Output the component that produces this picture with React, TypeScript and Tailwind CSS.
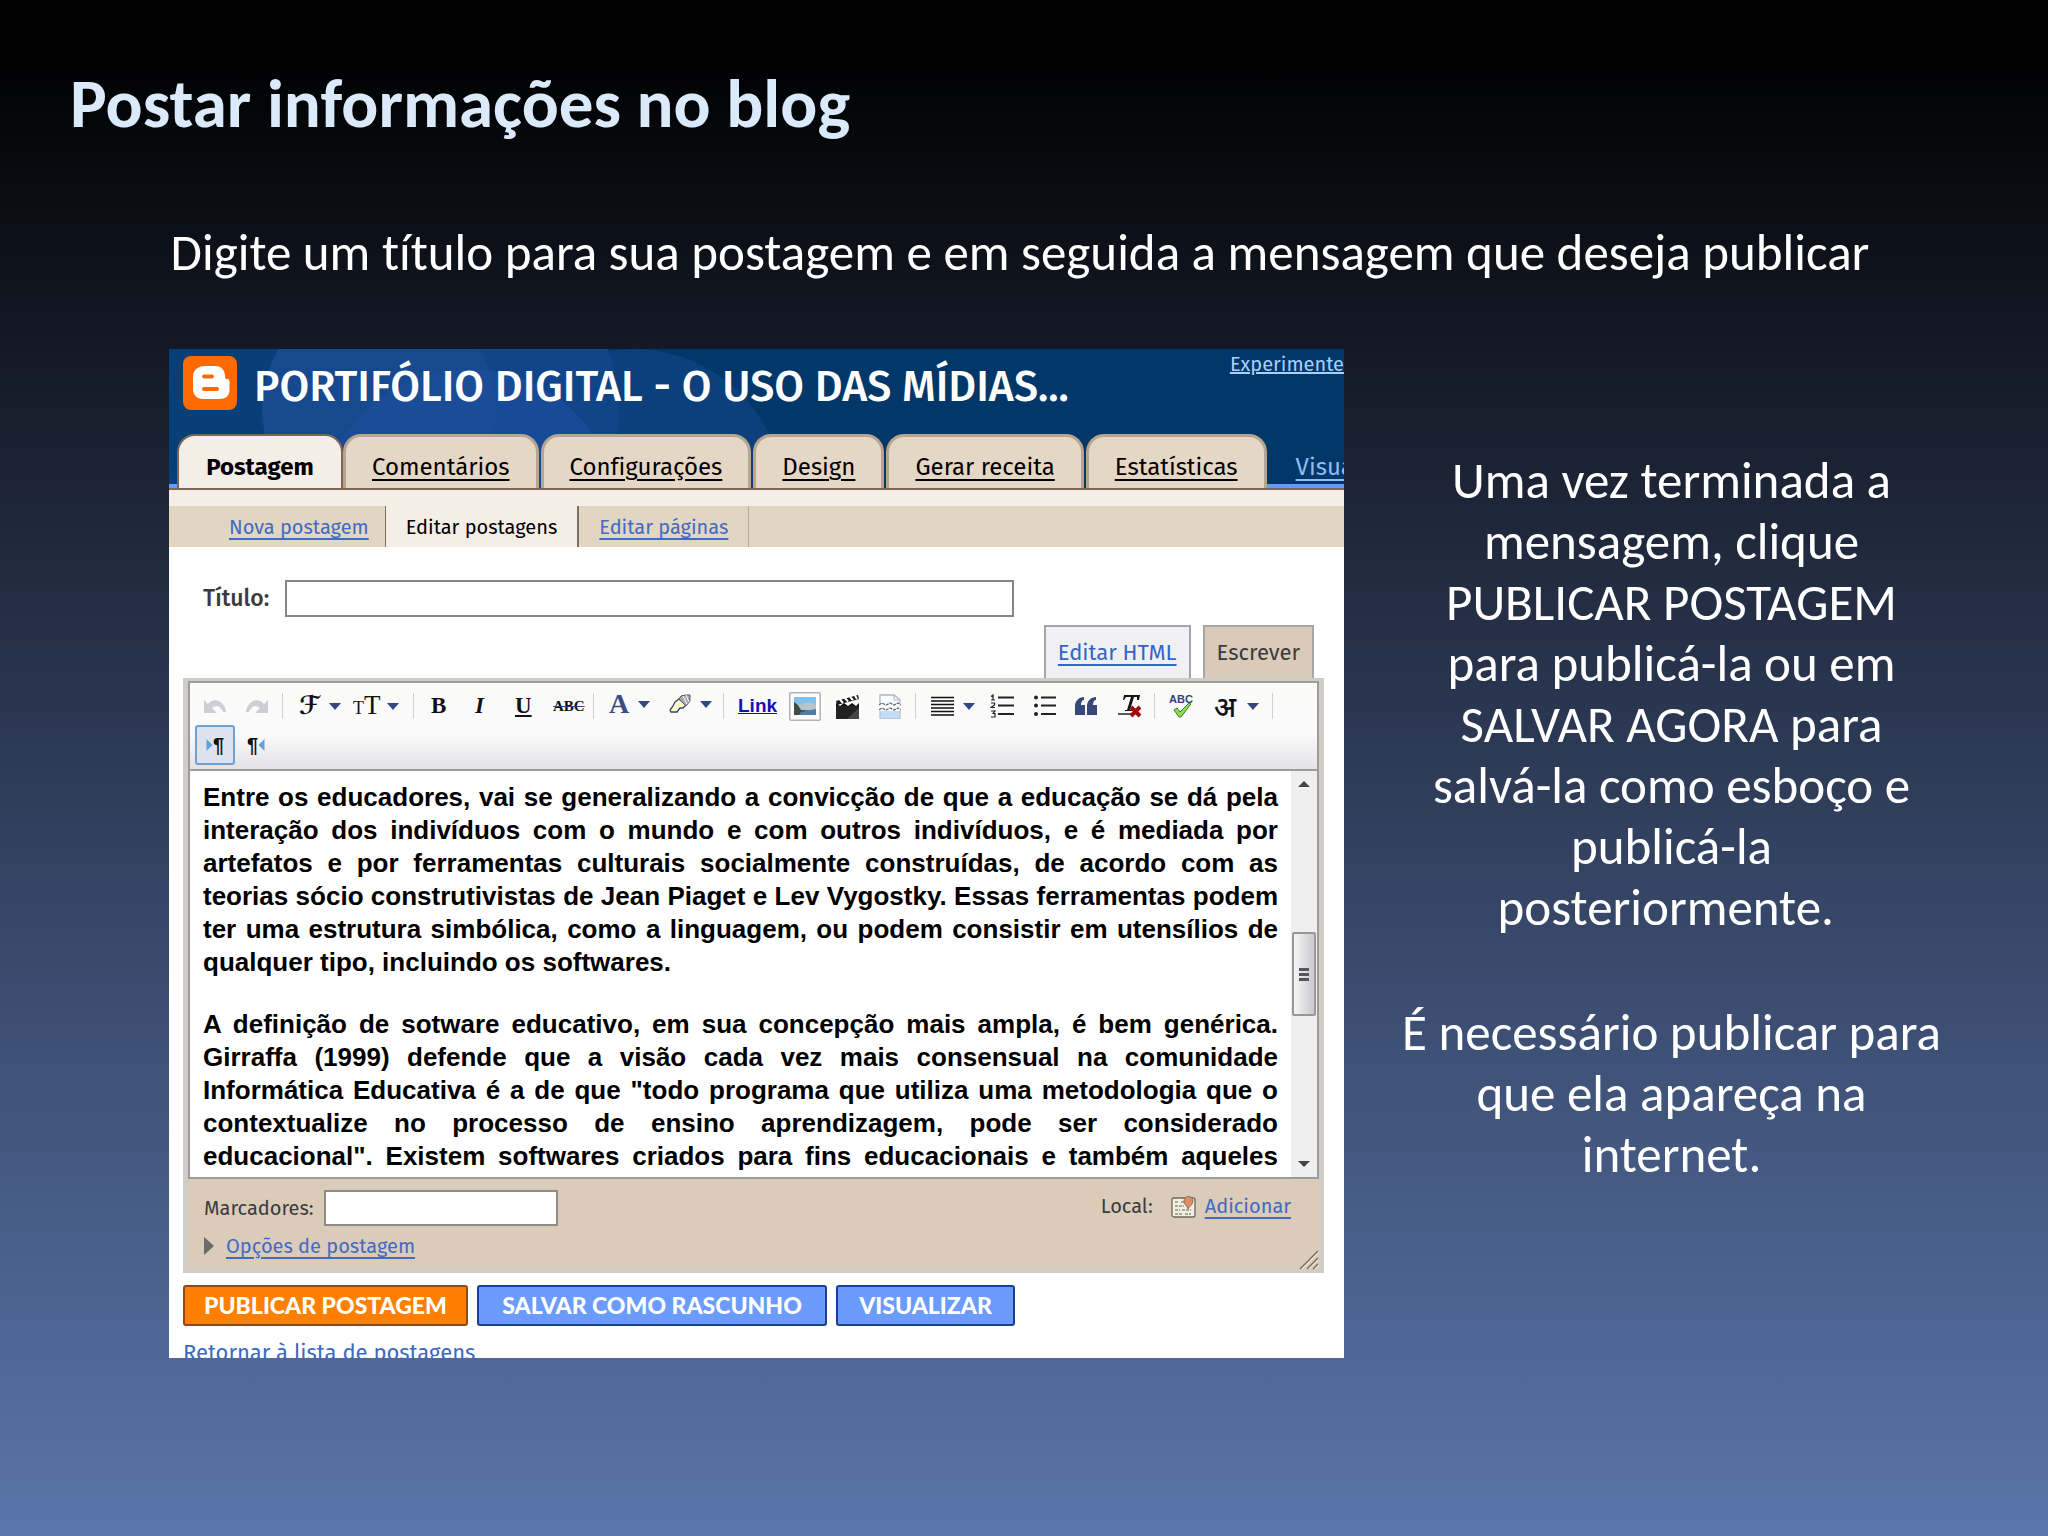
import {useState} from "react";
import type {ReactNode} from "react";

const tabs = ["Comentários", "Configurações", "Design", "Gerar receita", "Estatísticas"];

const Logo = () => (
  <svg viewBox="0 0 54 54" className="h-[54px] w-[54px] flex-none" aria-hidden="true">
    <rect width="54" height="54" rx="8" fill="#fe6a00" />
    <path
      d="M22 10h10c7 0 10 5 10 10 0 3 1 3 2.500 3 1.500 0 2 1 2 3v8c0 6-4 9-10 9H20c-6 0-10-4-10-10V21c0-7 5-11 12-11z"
      fill="#fff"
    />
    <path d="M21 20.500h8M21 33h13" stroke="#fe6a00" strokeWidth="4" strokeLinecap="round" />
  </svg>
);

const Tool = ({label, className, children}: {label: string; className: string; children: ReactNode}) => (
  <button type="button" aria-label={label} title={label} className={`flex h-8 flex-none items-center ${className}`}>
    {children}
  </button>
);

const Sep = () => <span className="h-[26px] w-px flex-none bg-[#cfcfd4]" />;

const Arrow = () => (
  <svg viewBox="0 0 12 7" className="h-[7px] w-3 flex-none" aria-hidden="true">
    <path d="M0 0h12L6 7z" fill="#35477f" />
  </svg>
);

const UndoIcon = ({flip}: {flip?: boolean}) => (
  <svg viewBox="0 0 24 16" className={flip ? "h-4 w-6 -scale-x-100" : "h-4 w-6"} aria-hidden="true">
    <path d="M1 2v13h13l-5-5c4-4 9-2 11 4h3C22 4 12-2 5 6z" fill="#cdced8" />
  </svg>
);

const BrushIcon = () => (
  <svg viewBox="0 0 24 20" className="h-5 w-6" aria-hidden="true">
    <path d="M11 5l7 6-3 3-3 0-3 4H3l-1-2 3-4 2-4z" fill="#fffbc8" stroke="#35426f" strokeWidth="1.300" />
    <path d="M13 2l5-1 4 0v6l-4 5-7-7z" fill="#a9a9ad" stroke="#55565e" strokeWidth="1" />
    <path d="M15 2l4 8M18 1l3 7" stroke="#fff" strokeWidth="1" />
  </svg>
);

const PictureIcon = () => (
  <svg viewBox="0 0 32 29" className="h-[29px] w-8" aria-hidden="true">
    <rect x="0.750" y="0.750" width="30.500" height="27.500" rx="1" fill="#fdfdfd" stroke="#b4b4b8" strokeWidth="1.500" />
    <rect x="5" y="5" width="22" height="18" fill="#7fc0ee" />
    <path d="M5 13c4-3 7 1 10-1s5-3 12 1v5H5z" fill="#b9c4c8" />
    <path d="M5 10l4 3 3 5 15 1v4H5z" fill="#3f4c44" />
    <path d="M12 20l15-3v6H10z" fill="#4d7da5" />
  </svg>
);

const ClapperIcon = () => (
  <svg viewBox="0 0 25 25" className="h-[25px] w-[25px]" aria-hidden="true">
    <path d="M1 12h23v13H1z" fill="#222" />
    <path d="M12 25l12-11v11z" fill="#44464a" />
    <path d="M1 9l4 3 4-3 4 3 4-3 4 3 3-3v3H1z" fill="#111" />
    <path d="M1 7l22-6 1 4L2 11z" fill="#1b1b1b" />
    <path d="M5 5.500l3 3.500M10 4l3 3.500M15 3l3 3M20 1.500l2 3.500" stroke="#fff" strokeWidth="2" />
  </svg>
);

const PageBreakIcon = () => (
  <svg viewBox="0 0 22 25" className="h-[25px] w-[22px]" aria-hidden="true">
    <path d="M1 10V1h14l6 5v4" fill="#fafcff" stroke="#b3b6bd" strokeWidth="1.300" />
    <path d="M15 1v5h6" fill="none" stroke="#b3b6bd" />
    <path d="M1 17v8h20v-8" fill="#c3dcf7" stroke="#b3b6bd" strokeWidth="1" />
    <path d="M0 11l3-2 4 2 4-2 4 2 4-2 3 2M0 16l3-2 4 2 4-2 4 2 4-2 3 2" fill="none" stroke="#5b6270" strokeWidth="1.200" strokeDasharray="3 1" />
  </svg>
);

const JustifyIcon = () => (
  <svg viewBox="0 0 24 20" className="h-5 w-6" aria-hidden="true">
    <path d="M0 1.500h23M0 5h23M0 8.500h23M0 12h23M0 15.500h23M0 19h23" stroke="#111" strokeWidth="1.600" />
  </svg>
);

const NumbersIcon = () => (
  <svg viewBox="0 0 24 24" className="h-6 w-6" aria-hidden="true">
    <path d="M8 3.500h16M8 11.500h16M8 20h16" stroke="#222" strokeWidth="2" />
    <path d="M1 2.500L3 1v5M1 6h4M1 9h3.500v2L1 13.500h4M1 17h4l-2 2.500h2V23H1" fill="none" stroke="#222" strokeWidth="1.200" />
  </svg>
);

const BulletsIcon = () => (
  <svg viewBox="0 0 24 24" className="h-6 w-6" aria-hidden="true">
    <path d="M8 3.500h15M8 11.500h15M8 20h15" stroke="#222" strokeWidth="2" />
    <circle cx="3" cy="3.500" r="2" fill="#222" />
    <circle cx="3" cy="11.500" r="2" fill="#222" />
    <circle cx="3" cy="20" r="2" fill="#222" />
  </svg>
);

const QuoteIcon = () => (
  <svg viewBox="0 0 22 18" className="h-[18px] w-[22px]" aria-hidden="true">
    <path d="M9 0v3C7 3 6 5 6 8h4v10H0V9C0 4 4 0 9 0zM21 0v3c-2 0-3 2-3 5h4v10H12V9c0-5 4-9 9-9z" fill="#374879" />
  </svg>
);

const ClearIcon = () => (
  <svg viewBox="0 0 24 24" className="h-6 w-6" aria-hidden="true">
    <path d="M6 1h16l-1 5h-2V3h-3l-4 13h3v1H7v-1h2L13 3H8L6 6H5z" fill="#151515" />
    <path d="M0 20h13" stroke="#222" strokeWidth="1.500" />
    <path d="M13 13l9 9M22 13l-9 9" stroke="#a5090c" strokeWidth="4" />
  </svg>
);

const SpellIcon = () => (
  <span className="relative flex h-6 w-6 justify-center">
    <span className="font-[Liberation_Sans] text-[11px] leading-[10px] font-bold text-[#2f3f78]">ABC</span>
    <svg viewBox="0 0 18 16" className="absolute top-2 left-1 h-4 w-[18px]" aria-hidden="true">
      <path d="M1 8l3-2 3 4 9-9 2 1-10 13H6z" fill="#8be04a" stroke="#3e7f35" strokeWidth="1" />
    </svg>
  </span>
);

const MapIcon = () => (
  <svg viewBox="0 0 25 23" className="h-[23px] w-[25px]" aria-hidden="true">
    <rect x="1" y="3" width="23" height="19" rx="2" fill="#f2efe0" stroke="#6d675c" strokeWidth="1.300" />
    <path d="M4 7h4M10 7h3M4 11h9M4 15h5M11 15h9M4 19h8M14 19h6" stroke="#8f9480" strokeWidth="1.500" strokeDasharray="3 1" />
    <path d="M17 14c0-3-4-4-4-8a4.500 4.500 0 0 1 9 0c0 4-4 5-5 8z" fill="#df8f62" stroke="#8e6c58" />
  </svg>
);

const DirIcon = ({flip}: {flip?: boolean}) => (
  <svg viewBox="0 0 6 12" className={flip ? "h-3 w-[7px] -scale-x-100" : "h-3 w-[7px]"} aria-hidden="true">
    <path d="M0 0l6 6-6 6z" fill="#5ea3d8" />
  </svg>
);

const Toolbar = () => (
  <div className="h-[88px] border-b-2 border-[#9c9c9c] bg-linear-to-b from-[#fbfcf9] via-[#fafafb] via-60% to-[#e3e2e5] pt-[7px] font-[Liberation_Serif] text-[#111]">
    <div className="flex h-8 items-center pl-[13px]">
      <Tool label="Desfazer" className="w-[42px]"><UndoIcon /></Tool>
      <Tool label="Refazer" className="w-[37px]"><UndoIcon flip /></Tool>
      <Sep />
      <Tool label="Fonte" className="w-[70px] gap-2 pl-[14px]">
        <span className="w-6 font-[DejaVu_Sans] text-[25px] leading-8 font-bold">ℱ</span>
        <Arrow />
      </Tool>
      <Tool label="Tamanho da fonte" className="w-[60px] gap-1">
        <span className="flex w-[30px] items-baseline leading-8">
          <span className="text-[18px]">T</span>
          <span className="text-[27px]">T</span>
        </span>
        <Arrow />
      </Tool>
      <Sep />
      <Tool label="Negrito" className="w-[42px] pl-[17px] text-[23px] font-bold">B</Tool>
      <Tool label="Itálico" className="w-[42px] pl-[19px] text-[23px] font-bold italic">I</Tool>
      <Tool label="Sublinhado" className="w-[37px] pl-[17px] text-[23px] font-bold underline">U</Tool>
      <Tool label="Tachado" className="w-[58px] pl-[18px] text-[15px] font-bold line-through decoration-[#35477f]">ABC</Tool>
      <Sep />
      <Tool label="Cor do texto" className="w-[74px] gap-2 pb-1 pl-[14px] text-[28px] font-bold text-[#3a4d80]">
        <span className="w-[22px] leading-7">A</span>
        <Arrow />
      </Tool>
      <Tool label="Cor de realce" className="w-[55px] gap-2 pb-1"><BrushIcon /><Arrow /></Tool>
      <Sep />
      <a href="#link" className="ml-[14px] w-[51px] flex-none font-[Liberation_Sans] text-[19px] leading-8 font-bold text-[#1410b8] underline">Link</a>
      <Tool label="Imagem" className="w-[46px]"><PictureIcon /></Tool>
      <Tool label="Vídeo" className="w-11"><ClapperIcon /></Tool>
      <Tool label="Quebra de página" className="w-9"><PageBreakIcon /></Tool>
      <Sep />
      <Tool label="Alinhamento" className="w-[74px] gap-2 pl-[15px]"><JustifyIcon /><Arrow /></Tool>
      <Tool label="Lista numerada" className="w-[43px]"><NumbersIcon /></Tool>
      <Tool label="Lista com marcadores" className="w-[42px]"><BulletsIcon /></Tool>
      <Tool label="Citação" className="w-[43px]"><QuoteIcon /></Tool>
      <Tool label="Remover formatação" className="w-9"><ClearIcon /></Tool>
      <Sep />
      <Tool label="Verificar ortografia" className="w-14 pl-[14px]"><SpellIcon /></Tool>
      <Tool label="Transliteração" className="w-[61px] gap-2">
        <span className="w-[28px] font-[Noto_Sans] text-[28px] leading-8 font-medium">अ</span>
        <Arrow />
      </Tool>
      <Sep />
    </div>
    <div className="mt-[3px] flex items-center gap-3 pl-[5px] font-[Liberation_Sans] text-[20px] font-bold">
      <button type="button" aria-label="Esquerda para a direita" className="flex h-10 w-10 items-center justify-center rounded-[3px] border-2 border-[#6f9fd3] bg-[#dde3ed]">
        <DirIcon />¶
      </button>
      <button type="button" aria-label="Direita para a esquerda" className="flex h-10 items-center">
        ¶<DirIcon flip />
      </button>
    </div>
  </div>
);

const ScrollBar = () => (
  <div className="flex w-[26px] flex-none flex-col items-center justify-between bg-[#f0eff0] py-[10px]">
    <svg viewBox="0 0 12 6" className="h-[6px] w-3" aria-hidden="true"><path d="M0 6h12L6 0z" fill="#444" /></svg>
    <div className="flex h-[84px] w-6 flex-col items-center justify-center gap-[2px] rounded-[2px] border-2 border-[#98989a] bg-linear-to-r from-[#f6f6f6] to-[#c9cacd]">
      <span className="h-[3px] w-[10px] bg-[#55565a]" />
      <span className="h-[3px] w-[10px] bg-[#55565a]" />
      <span className="h-[3px] w-[10px] bg-[#55565a]" />
    </div>
    <svg viewBox="0 0 12 6" className="h-[6px] w-3" aria-hidden="true"><path d="M0 0h12L6 6z" fill="#444" /></svg>
  </div>
);

const BlogHeader = () => (
  <header className="relative flex h-[139px] flex-col justify-between overflow-hidden bg-[#013769]">
    <svg viewBox="0 0 1175 139" preserveAspectRatio="xMinYMin slice" className="absolute inset-0 h-full w-full" aria-hidden="true">
      <path d="M0 0h440v139H0z" fill="#083f78" />
      <circle cx="465" cy="150" r="150" fill="#0b407c" />
      <circle cx="290" cy="60" r="160" fill="#10458a" />
      <circle cx="210" cy="60" r="117" fill="#16498e" />
      <circle cx="300" cy="170" r="150" fill="#1d4f9d" fillOpacity="0.700" />
    </svg>
    <div className="relative flex items-start pt-[7px] pl-[14px]">
      <Logo />
      <h2 className="ml-[17px] text-[43px] leading-[62px] font-medium whitespace-nowrap text-white">
        PORTIFÓLIO DIGITAL - O USO DAS MÍDIAS...
      </h2>
      <a href="#experimente" className="absolute right-0 text-[20px] leading-4 text-[#a9cffb] underline">
        Experimente
      </a>
    </div>
    <nav className="relative flex h-[54px] items-end">
      <span className="h-1 w-2 self-end bg-[#6699ff]" />
      <a href="#postagem" className="h-[54px] w-[166px] flex-none rounded-t-[18px] border-2 border-b-0 border-[#7c6657] bg-[#f4eee7] pt-[11px] text-center text-[24px] leading-[40px] font-bold text-black">
        Postagem
      </a>
      <div className="flex gap-[2px]">
        {tabs.map((tab) => (
          <a
            key={tab}
            href={`#${tab}`}
            className="h-[54px] flex-none rounded-t-[18px] border-[3px] border-b-0 border-[#b8a590] bg-[#e5d7c5] px-[26px] pt-[10px] text-[24px] leading-[40px] text-black underline underline-offset-4"
          >
            {tab}
          </a>
        ))}
      </div>
      <span className="h-[54px] flex-1 overflow-hidden border-b-4 border-[#6699ff] pt-[13px] pl-[29px] text-[24px] leading-[40px]">
        <a href="#visualizar" className="text-[#8fbcf2] underline underline-offset-4">Visua</a>
      </span>
    </nav>
  </header>
);

const Editor = () => {
  const [title, setTitle] = useState("");
  const [labels, setLabels] = useState("");

  return (
    <form className="pr-5 pl-[14px]" onSubmit={(e) => e.preventDefault()}>
      <div className="flex items-center pt-[33px] pl-5 text-[23px] font-medium text-[#3b3b3f]">
        <label htmlFor="titulo" className="w-[82px]">Título:</label>
        <input
          id="titulo"
          value={title}
          onChange={(e) => setTitle(e.target.value)}
          className="h-[37px] w-[729px] border-2 border-[#85868a] bg-white"
        />
      </div>
      <div className="mt-2 flex justify-end gap-3 pr-[10px] text-[22px] leading-[51px]">
        <button type="button" className="border-2 border-b-0 border-[#a5a5aa] bg-[#f0eff2] px-3 text-[#3565c8] underline underline-offset-4">
          Editar HTML
        </button>
        <button type="button" className="border-2 border-b-0 border-[#a5a5aa] bg-[#dacab8] px-3 text-[#3b3b3f]">
          Escrever
        </button>
      </div>

      <div className="border-x-[5px] border-y-[3px] border-[#d0cdc7] bg-[#dbcbb9]">
        <div className="border-2 border-[#9c9c9c]">
          <Toolbar />
          <div className="flex h-[406px] overflow-hidden bg-white">
            <div className="flex-1 pt-[10px] pr-[13px] pl-[13px] text-justify font-[Liberation_Sans] text-[26px] leading-[33px] font-bold text-black">
              <p>
                Entre os educadores, vai se generalizando a convicção de que a educação se dá pela interação dos indivíduos com o
                mundo e com outros indivíduos, e é mediada por artefatos e por ferramentas culturais socialmente construídas, de
                acordo com as teorias sócio construtivistas de Jean Piaget e Lev Vygostky. Essas ferramentas podem ter uma
                estrutura simbólica, como a linguagem, ou podem consistir em utensílios de qualquer tipo, incluindo os softwares.
              </p>
              <p className="mt-[29px] [text-align-last:justify]">
                A definição de sotware educativo, em sua concepção mais ampla, é bem genérica. Girraffa (1999) defende que a visão
                cada vez mais consensual na comunidade Informática Educativa é a de que "todo programa que utiliza uma metodologia
                que o contextualize no processo de ensino aprendizagem, pode ser considerado educacional". Existem softwares
                criados para fins educacionais e também aqueles
              </p>
            </div>
            <ScrollBar />
          </div>
        </div>

        <div className="relative flex h-[91px] justify-between pt-[11px] pr-[28px] pl-4 text-[20px] text-[#3b3b3f]">
          <div>
            <div className="flex items-center">
              <label htmlFor="marcadores" className="w-[120px]">Marcadores:</label>
              <input
                id="marcadores"
                value={labels}
                onChange={(e) => setLabels(e.target.value)}
                className="h-9 w-[234px] border-2 border-[#8f8b85] bg-white"
              />
            </div>
            <div className="mt-1 flex items-center gap-3 leading-8">
              <svg viewBox="0 0 10 18" className="h-[18px] w-[10px]" aria-hidden="true"><path d="M0 0l10 9-10 9z" fill="#6b6b6b" /></svg>
              <a href="#opcoes" className="text-[#416bc4] underline underline-offset-4">Opções de postagem</a>
            </div>
          </div>
          <div className="flex h-8 items-center">
            <span className="mr-[18px]">Local:</span>
            <MapIcon />
            <a href="#local" className="ml-[9px] text-[#416bc4] underline underline-offset-4">Adicionar</a>
          </div>
          <svg viewBox="0 0 20 20" className="absolute right-0 bottom-0 h-5 w-5" aria-hidden="true">
            <path d="M1 19L19 1M8 19L19 8M14 19l5-5" stroke="#7c746c" strokeWidth="1.500" />
            <path d="M3 19L20 2M10 19L20 9M16 19l4-4" stroke="#f5f0ea" strokeWidth="1" />
          </svg>
        </div>
      </div>

      <div className="mt-3 flex gap-[9px] font-[Lato] text-[23px] leading-[37px] font-black text-white">
        <button type="submit" className="w-[285px] rounded-[3px] border-2 border-[#9a4708] bg-[#ff7f00]">
          PUBLICAR POSTAGEM
        </button>
        <button type="button" className="w-[350px] rounded-[3px] border-2 border-[#1a3f94] bg-[#6b9bfc]">
          SALVAR COMO RASCUNHO
        </button>
        <button type="button" className="w-[179px] rounded-[3px] border-2 border-[#1a3f94] bg-[#6b9bfc]">
          VISUALIZAR
        </button>
      </div>
      <div className="mt-3 h-5 overflow-hidden text-[22px] leading-[30px]">
        <a href="#lista" className="text-[#3d68c4] underline underline-offset-4">Retornar à lista de postagens</a>
      </div>
    </form>
  );
};

const App = () => {
  return (
    <main className="min-h-screen bg-linear-to-b/srgb from-black from-3% via-[#2c3954] via-48% to-[#5a75aa] pb-24 font-[Carlito,Lato,sans-serif] text-white [font-variant-ligatures:none]">
      <h1 className="pt-[62px] pl-[70px] text-[69px] leading-[84px] font-bold text-[#dbeafb]">Postar informações no blog</h1>
      <p className="mt-[76px] pr-2 text-center text-[51px] leading-[62px]">
        Digite um título para sua postagem e em seguida a mensagem que deseja publicar
      </p>

      <div className="mt-[65px] grid grid-cols-[1175fr_704fr] items-start pl-[169px]">
        <section className="min-w-0 overflow-hidden bg-white font-[Fira_Sans,Open_Sans,sans-serif]">
          <BlogHeader />
          <div className="h-[18px] border-t-2 border-[#7c6657] bg-[#f4eee7]" />
          <nav className="flex h-[41px] bg-[#e2d6c3] pl-10 text-[20px] leading-[42px]">
            <a href="#nova" className="pr-4 pl-5 text-[#416bc4] underline underline-offset-4">Nova postagem</a>
            <a href="#editar" className="border-r-2 border-l border-[#7a6f63] bg-[#f4eee7] px-5 text-black">Editar postagens</a>
            <a href="#paginas" className="border-r border-[#b8ab99] px-5 text-[#416bc4] underline underline-offset-4">Editar páginas</a>
          </nav>
          <Editor />
        </section>

        <aside className="pt-[101px] pr-[101px] pl-[52px] text-center text-[51px] leading-[61px]">
          <p>
            Uma vez terminada a mensagem, clique PUBLICAR POSTAGEM para publicá-la ou em SALVAR AGORA para salvá-la como esboço e
            publicá-la posteriormente.&nbsp;
          </p>
          <p className="mt-16">É necessário publicar para que ela apareça na internet.</p>
        </aside>
      </div>
    </main>
  );
};

export default App;
